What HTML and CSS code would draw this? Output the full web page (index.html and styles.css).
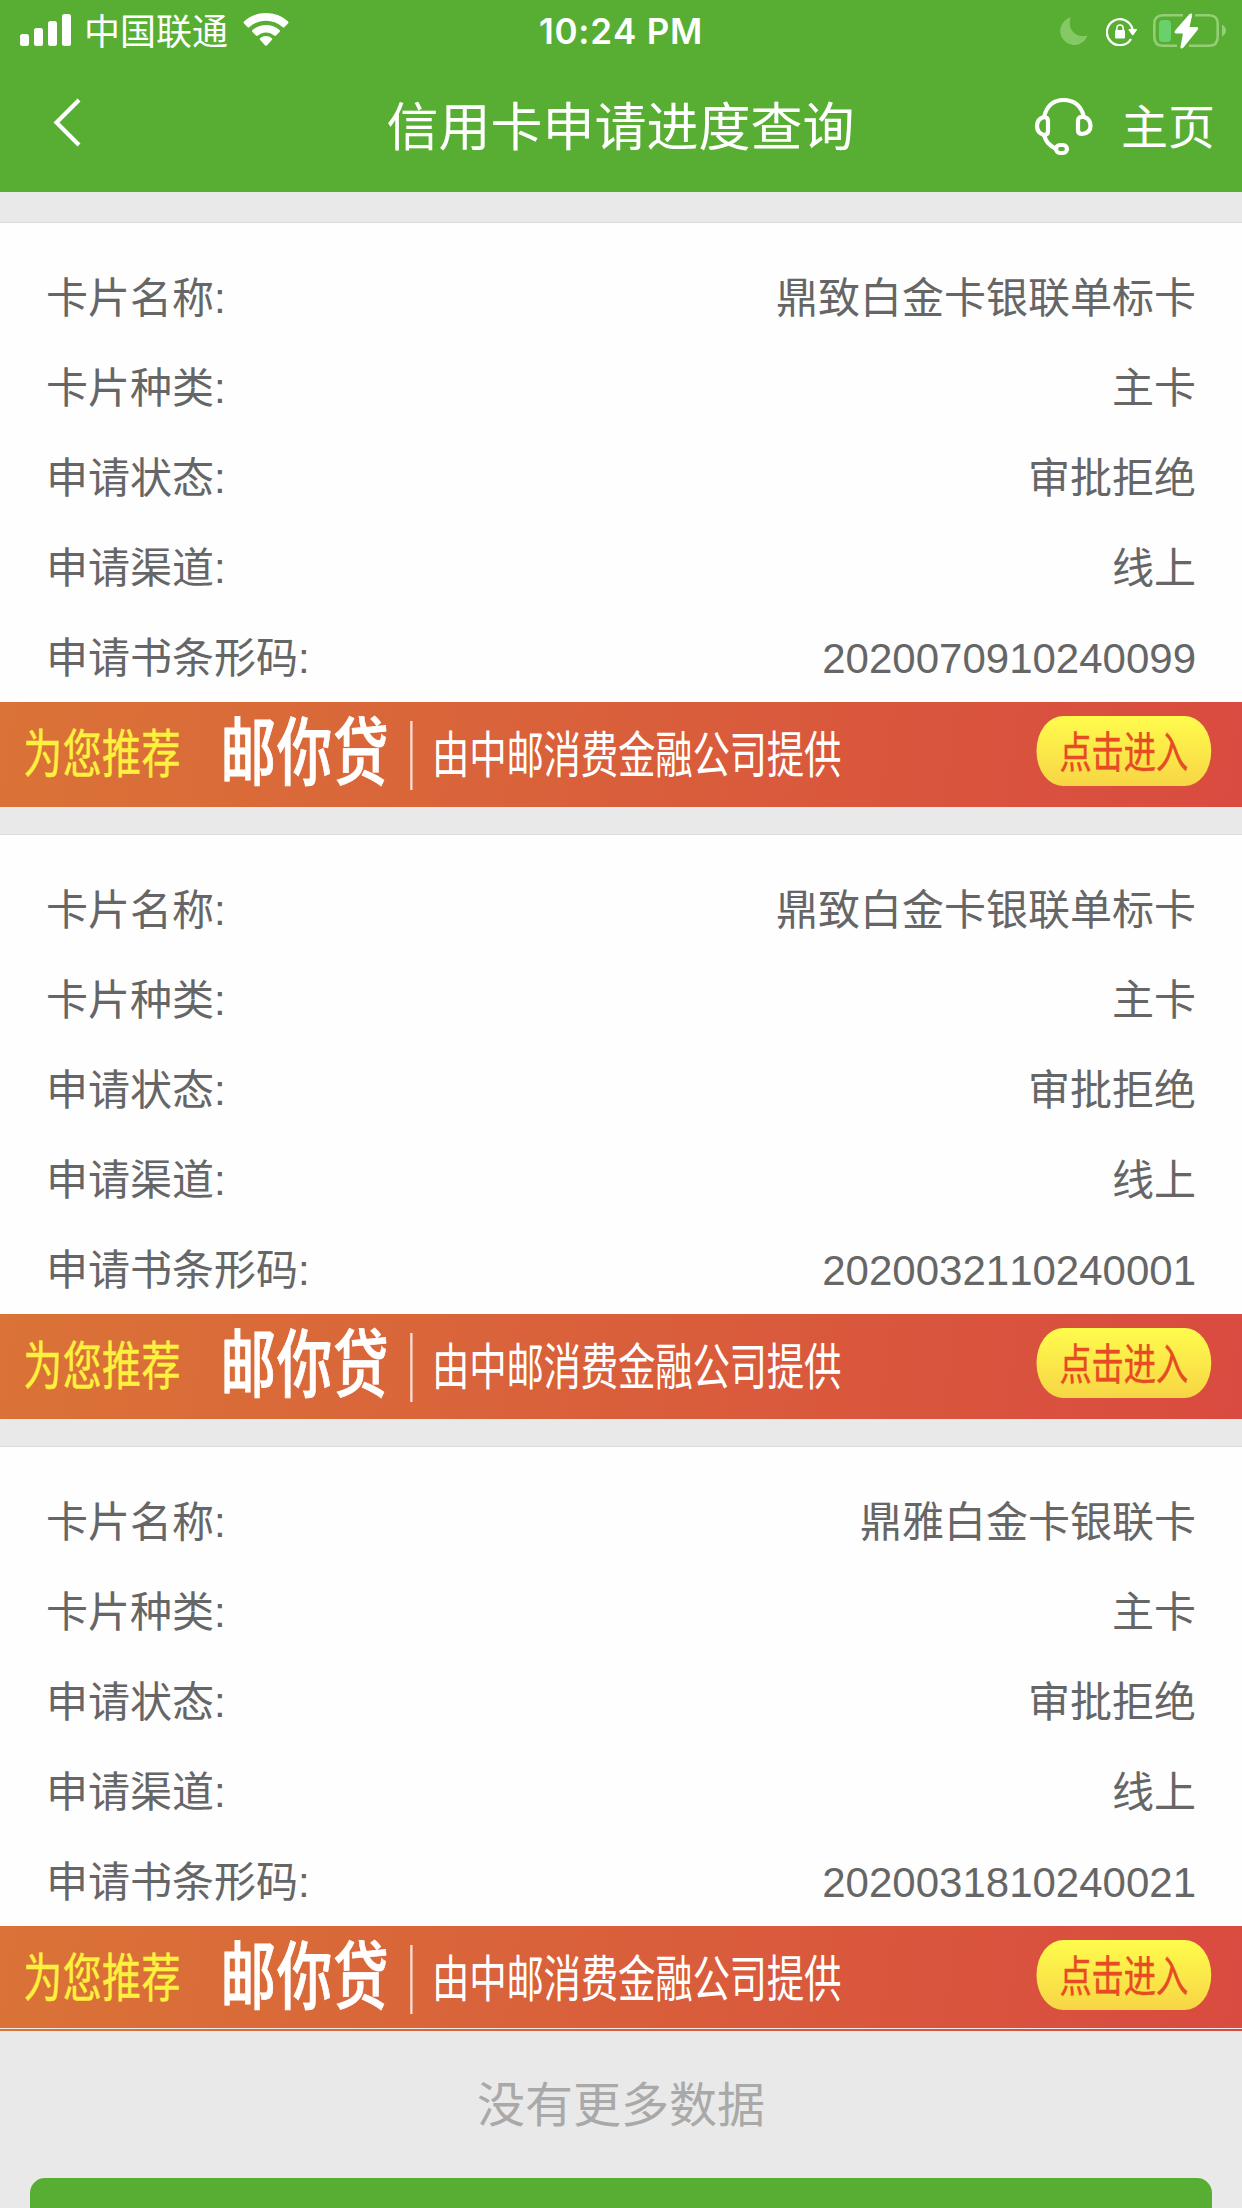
FILE: index.html
```html
<!DOCTYPE html>
<html lang="zh-CN">
  <head>
    <meta charset="UTF-8" />
    <meta name="viewport" content="width=device-width, initial-scale=1.0" />
    <title>信用卡申请进度查询</title>
    <link rel="stylesheet" href="styles.css">
  </head>
  <body>
    <header>
      <div class="status-bar">
        <div class="status-left">
          <svg class="signal" width="52" height="32" viewBox="0 0 52 32" fill="#fff">
            <rect x="0" y="20" width="9" height="12" rx="2.5" />
            <rect x="14" y="14" width="9" height="18" rx="2.5" />
            <rect x="28" y="7" width="9" height="25" rx="2.5" />
            <rect x="42" y="0" width="9" height="32" rx="2.5" />
          </svg>
          <span class="carrier">中国联通</span>
          <svg class="wifi" width="46" height="34" viewBox="0 0 46 34" fill="#fff">
            <path d="M1 10.500Q0 9.500 1 8.500C13-2.700 33-2.700 45 8.500Q46 9.500 45 10.500L41.500 14Q40.500 15 39.500 14C30 5.500 16 5.500 6.500 14Q5.500 15 4.500 14Z" />
            <path d="M9.500 19Q8.500 18 9.500 17C17 10.200 29 10.200 36.500 17Q37.500 18 36.500 19L33 22.500Q32 23.300 31 22.500C26.500 18.500 19.500 18.500 15 22.500Q14 23.300 13 22.500Z" />
            <path d="M17 26.800Q16 26 17.200 25.200C20.500 22.300 25.500 22.300 28.800 25.200Q30 26 29 26.800L24 32.300Q23 33.400 22 32.300Z" />
          </svg>
        </div>
        <span class="time">10:24 PM</span>
        <div class="status-right">
          <svg width="28" height="28" viewBox="0 0 28 28">
            <path fill="#85c965" d="M11 0.300A14 14 0 1 0 27.500 18.500C25.500 19 24 19.200 22 19A12.500 12.500 0 0 1 9.800 6.500C9.800 4 10.200 2 11 0.300Z" />
          </svg>
          <svg class="lock" width="32" height="28" viewBox="0 0 32 28">
            <path fill="none" stroke="#fff" stroke-width="2.300" d="M26.600 11.500A13 13 0 1 0 25 21" />
            <path fill="#fff" d="M22.500 12Q22.200 11 23.300 11H30.300Q31.500 11 30.900 12L27.600 16.800Q26.800 17.800 26 16.800Z" />
            <rect x="9" y="12" width="10" height="8.500" rx="1.300" fill="#fff" />
            <path fill="none" stroke="#fff" stroke-width="1.600" d="M10.800 13V10.500Q10.800 7 14 7T17.200 10.500V13" />
          </svg>
          <svg width="74" height="36" viewBox="0 0 74 36">
            <path fill="none" stroke="#95ce76" stroke-width="2.600" d="M30 2.300H10Q1.300 2.300 1.300 11V24Q1.300 32.700 10 32.700H24M42 2.300H56Q64.700 2.300 64.700 11V24Q64.700 32.700 56 32.700H36" />
            <path fill="#95ce76" d="M69 11.500Q73 14 73 17.500T69 23.500Z" />
            <rect x="6" y="7" width="12" height="22" rx="4" fill="#69d06c" />
            <path fill="#fff" d="M36.500 1Q39.800-.5 39 3L36.500 14H43Q46.500 14 44.500 17L30.500 34.500Q27 36.700 27.500 33.500L30 20.500H23.500Q20.300 20.200 22.500 17Z" />
          </svg>
        </div>
      </div>
      <nav class="nav-bar">
        <div class="nav-side">
          <svg class="back" width="30" height="50" viewBox="0 0 30 50" fill="none" stroke="#fff" stroke-width="4.200">
            <path d="M26 3L3.500 25.500L26 48" />
          </svg>
        </div>
        <h1>信用卡申请进度查询</h1>
        <div class="nav-side nav-right">
          <svg class="service" width="60" height="60" viewBox="0 0 60 60" fill="none" stroke="#fff" stroke-width="4.200">
            <path d="M10 20C13 8 20 3 29.500 3S47 8 50 20" />
            <path d="M10 20Q14 20 14 24V34Q14 38 10 38Q3 36 3 29T10 20Z" />
            <path d="M50 20Q44 19 44 24V33Q44 37 48 37Q56.500 36 56.500 29T50 20Z" />
            <path d="M10 38C12 45 15 48 22 52" />
            <rect x="22" y="48" width="11" height="8" rx="4" />
          </svg>
          <span class="home">主页</span>
        </div>
      </nav>
    </header>

    <main>
      <section class="card">
        <dl>
          <div class="row"><dt>卡片名称:</dt><dd>鼎致白金卡银联单标卡</dd></div>
          <div class="row"><dt>卡片种类:</dt><dd>主卡</dd></div>
          <div class="row"><dt>申请状态:</dt><dd>审批拒绝</dd></div>
          <div class="row"><dt>申请渠道:</dt><dd>线上</dd></div>
          <div class="row"><dt>申请书条形码:</dt><dd>2020070910240099</dd></div>
        </dl>
        <div class="banner">
          <div class="banner-inner">
            <span class="tag">为您推荐</span>
            <span class="brand">邮你贷</span>
            <span class="line"></span>
            <span class="provider">由中邮消费金融公司提供</span>
            <a class="enter">点击进入</a>
          </div>
        </div>
      </section>

      <section class="card">
        <dl>
          <div class="row"><dt>卡片名称:</dt><dd>鼎致白金卡银联单标卡</dd></div>
          <div class="row"><dt>卡片种类:</dt><dd>主卡</dd></div>
          <div class="row"><dt>申请状态:</dt><dd>审批拒绝</dd></div>
          <div class="row"><dt>申请渠道:</dt><dd>线上</dd></div>
          <div class="row"><dt>申请书条形码:</dt><dd>2020032110240001</dd></div>
        </dl>
        <div class="banner">
          <div class="banner-inner">
            <span class="tag">为您推荐</span>
            <span class="brand">邮你贷</span>
            <span class="line"></span>
            <span class="provider">由中邮消费金融公司提供</span>
            <a class="enter">点击进入</a>
          </div>
        </div>
      </section>

      <section class="card">
        <dl>
          <div class="row"><dt>卡片名称:</dt><dd>鼎雅白金卡银联卡</dd></div>
          <div class="row"><dt>卡片种类:</dt><dd>主卡</dd></div>
          <div class="row"><dt>申请状态:</dt><dd>审批拒绝</dd></div>
          <div class="row"><dt>申请渠道:</dt><dd>线上</dd></div>
          <div class="row"><dt>申请书条形码:</dt><dd>2020031810240021</dd></div>
        </dl>
        <div class="banner last">
          <div class="banner-inner">
            <span class="tag">为您推荐</span>
            <span class="brand">邮你贷</span>
            <span class="line"></span>
            <span class="provider">由中邮消费金融公司提供</span>
            <a class="enter">点击进入</a>
          </div>
        </div>
      </section>
    </main>

    <p class="no-more">没有更多数据</p>
    <button class="submit-btn"></button>
  </body>
</html>
```
FILE: styles.css
```css
* {
  box-sizing: border-box;
}

body {
  margin: 0;
  background-color: #e9e9e9;
  font-family: "Liberation Sans", "Noto Sans CJK SC", sans-serif;
  font-kerning: none;
  color: #666;
}

header {
  height: 192px;
  background-color: #58ae32;
  color: white;
}

.status-bar {
  display: flex;
  align-items: center;
  height: 62px;
  padding: 0 15px 0 20px;
}

.status-left,
.status-right {
  flex: 1;
  display: flex;
  align-items: center;
}

.status-right {
  justify-content: flex-end;
}

.signal {
  margin-top: -2px;
}

.carrier {
  margin: -4px 0 0 12px;
  font-family: "Noto Sans CJK SC", sans-serif;
  font-size: 36px;
  line-height: 58px;
}

.wifi {
  margin-left: 15px;
  margin-top: -3px;
}

.time {
  margin-right: 5px;
  font-family: Inter, sans-serif;
  font-size: 35px;
  font-weight: 600;
  letter-spacing: 0.8px;
}

.lock {
  margin: 2px 15px 0 18px;
}

.nav-bar {
  display: flex;
  align-items: center;
  height: 130px;
  padding: 0 27px 0 53px;
}

.nav-side {
  flex: 1;
  display: flex;
  align-items: center;
}

.back {
  margin-top: -11px;
}

h1 {
  margin: 2px 27px 0 0;
  font-size: 52px;
  font-weight: 400;
  line-height: 130px;
}

.nav-right {
  justify-content: flex-end;
}

.service {
  margin-top: -1px;
}

.home {
  margin: -7px 0 0 27px;
  font-size: 47px;
}

main {
  padding-top: 30px;
}

.card {
  background-color: #fefefe;
  border-top: 1px solid #dcdcdc;
  margin-bottom: 27px;
}

.card:last-child {
  margin-bottom: 0;
}

dl {
  height: 479px;
  margin: 0;
  padding: 31px 46px 0;
}

.row {
  display: flex;
  justify-content: space-between;
  height: 90px;
  font-size: 42px;
  line-height: 90px;
}

dd {
  margin: 0;
}

.banner {
  height: 105px;
  background: linear-gradient(98deg, #da7337, #d95f3b 50%, #d94b40);
}

/* banner artwork is squeezed horizontally to the screen width */
.banner-inner {
  display: flex;
  align-items: center;
  width: 1656px;
  height: 98px;
  padding-left: 31px;
  transform: scaleX(0.75);
  transform-origin: left;
  font-family: "Noto Sans CJK SC", sans-serif;
  line-height: 98px;
  white-space: nowrap;
  color: white;
}

.tag {
  width: 263px;
  font-size: 52px;
  letter-spacing: 0.5px;
  color: #fdf03e;
  -webkit-text-stroke: 0.5px #fdf03e;
}

.brand {
  width: 253px;
  margin-top: -8px;
  font-size: 74px;
  font-weight: 500;
  letter-spacing: 1px;
  -webkit-text-stroke: 0.8px white;
}

.line {
  width: 3px;
  height: 69px;
  margin-top: 9px;
  background-color: #fbe3da;
}

.provider {
  width: 832px;
  padding-left: 26px;
  font-size: 50px;
  letter-spacing: -0.4px;
}

.enter {
  width: 233px;
  height: 70px;
  border-radius: 35px;
  background: linear-gradient(#fffc4d, #f7d545);
  color: #e64b24;
  font-size: 43px;
  line-height: 66px;
  text-align: center;
  -webkit-text-stroke: 0.5px #e64b24;
}

.last {
  position: relative;
}

.last::after {
  content: "";
  position: absolute;
  left: 0;
  right: 0;
  bottom: 2px;
  height: 1px;
  background-color: #e9e9e9;
}

.no-more {
  height: 147px;
  margin: 0;
  font-size: 48px;
  line-height: 149px;
  text-align: center;
  color: #a9a9a9;
}

.submit-btn {
  display: block;
  width: 1182px;
  height: 30px;
  margin: 0 auto;
  border: none;
  border-radius: 15px 15px 0 0;
  background-color: #58ae32;
}
```
